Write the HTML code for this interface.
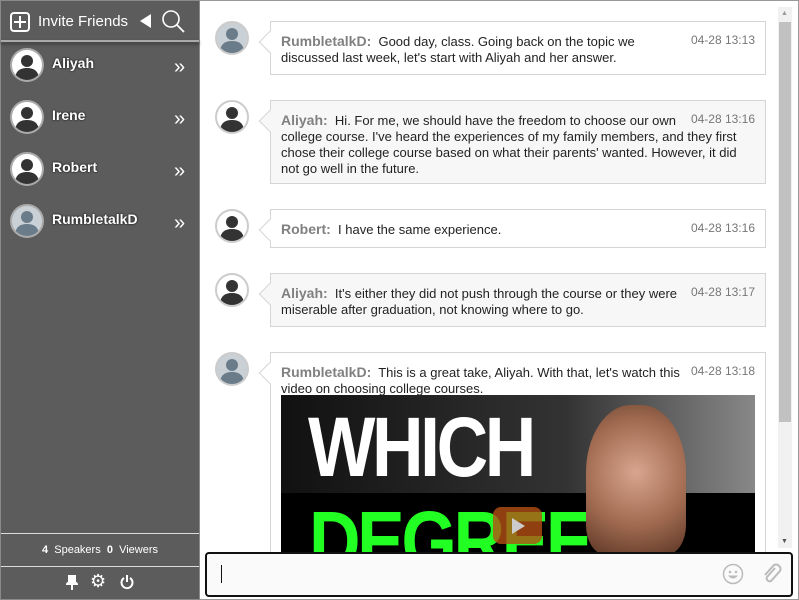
<!DOCTYPE html><html><head><style>
*{margin:0;padding:0;box-sizing:border-box}
body{width:799px;height:600px;overflow:hidden;font-family:Arial,"Liberation Sans",sans-serif;background:#fff;position:relative}
.sb{position:absolute;left:0;top:0;width:200px;height:600px;background:#5c5c5c;border:1px solid #8a8a8a}
.ab{position:absolute}
.av{position:absolute;width:34px;height:34px;border-radius:50%;background:#fff;border:2px solid #aaa;overflow:hidden}
.av.l{background:#c9d0d6}
.nm{position:absolute;left:52px;color:#fff;font-size:14px;text-shadow:0 0 2px #000;font-weight:bold}
.ch{position:absolute;left:174px;color:#fff;font-size:20px;line-height:20px}
.bub{position:absolute;left:270px;width:496px;border:1px solid #d5d5d5;font-size:13px;line-height:16px;color:#222;padding:11px 10px 9px 10px}
.bub b{color:#808080;font-size:14px}
.ts{position:absolute;right:10px;top:10px;color:#777;font-size:12px}
.ar{position:absolute;left:-9px;top:12px;width:16px;height:16px;background:inherit;border-left:1px solid #d5d5d5;border-bottom:1px solid #d5d5d5;transform:rotate(45deg)}
</style></head><body>
<div class="sb">
<div class="ab" style="left:9px;top:11px;width:20px;height:20px;border:2px solid #fff;border-radius:4px"></div>
<div class="ab" style="left:13px;top:20px;width:12px;height:2px;background:#fff"></div>
<div class="ab" style="left:18px;top:15px;width:2px;height:12px;background:#fff"></div>
<div class="ab" style="left:37px;top:12px;color:#fff;font-size:15px">Invite Friends</div>
<div class="ab" style="left:139px;top:13px;width:0;height:0;border-top:7px solid transparent;border-bottom:7px solid transparent;border-right:11px solid #fff"></div>
<svg class="ab" style="left:159px;top:7px" width="26" height="26"><circle cx="11" cy="11" r="8" fill="none" stroke="#fff" stroke-width="1.6"/><path d="M17 17L24 24" stroke="#fff" stroke-width="1.8"/></svg>
<div class="ab" style="left:0;top:39px;width:198px;height:2px;background:#aaa;box-shadow:0 2px 3px #333"></div>
</div>
<div class="av" style="left:10px;top:48px"><svg width="30" height="30"><circle cx="15" cy="11" r="6" fill="#333"/><path d="M3 30c0-9 5-12 12-12s12 3 12 12z" fill="#333"/></svg></div>
<div class="nm" style="top:55px">Aliyah</div><div class="ch" style="top:57px">»</div>
<div class="av" style="left:10px;top:100px"><svg width="30" height="30"><circle cx="15" cy="11" r="6" fill="#333"/><path d="M3 30c0-9 5-12 12-12s12 3 12 12z" fill="#333"/></svg></div>
<div class="nm" style="top:107px">Irene</div><div class="ch" style="top:109px">»</div>
<div class="av" style="left:10px;top:152px"><svg width="30" height="30"><circle cx="15" cy="11" r="6" fill="#333"/><path d="M3 30c0-9 5-12 12-12s12 3 12 12z" fill="#333"/></svg></div>
<div class="nm" style="top:159px">Robert</div><div class="ch" style="top:161px">»</div>
<div class="av l" style="left:10px;top:204px"><svg width="30" height="30"><circle cx="15" cy="11" r="6" fill="#6a7c8a"/><path d="M3 30c0-9 5-12 12-12s12 3 12 12z" fill="#6a7c8a"/></svg></div>
<div class="nm" style="top:211px">RumbletalkD</div><div class="ch" style="top:213px">»</div>
<div class="ab" style="left:1px;top:533px;width:198px;height:1px;background:#ddd"></div>
<div class="ab" style="left:0;top:544px;width:200px;text-align:center;color:#fff;font-size:11px;font-weight:bold">4 <span style="font-weight:normal">&nbsp;Speakers</span> &nbsp;0 <span style="font-weight:normal">&nbsp;Viewers</span></div>
<div class="ab" style="left:1px;top:566px;width:198px;height:1px;background:#ddd"></div>
<svg class="ab" style="left:66px;top:575px" width="12" height="16"><path d="M2 1h8M3 1v6l-2 2h10l-2-2V1M6 9v6" stroke="#fff" stroke-width="2" fill="#fff"/></svg>
<div class="ab" style="left:90px;top:571px;color:#fff;font-size:18px">&#9881;</div>
<svg class="ab" style="left:120px;top:574px" width="14" height="16"><path d="M4 4a5.5 5.5 0 1 0 6 0" fill="none" stroke="#fff" stroke-width="2"/><path d="M7 1v7" stroke="#fff" stroke-width="2"/></svg>
<div class="ab" style="left:200px;top:0;width:599px;height:600px;border:1px solid #999;border-left:none"></div>
<div class="ab" style="left:778px;top:7px;width:14px;height:541px;background:#f1f1f1"></div>
<div class="ab" style="left:779px;top:22px;width:12px;height:400px;background:#c1c1c1"></div>
<div class="ab" style="left:781px;top:10px;font-size:7px;color:#999">▲</div>
<div class="ab" style="left:781px;top:538px;font-size:7px;color:#555">▼</div>
<div class="av l" style="left:215px;top:21px;border-color:#ccc"><svg width="30" height="30"><circle cx="15" cy="11" r="6" fill="#6a7c8a"/><path d="M3 30c0-9 5-12 12-12s12 3 12 12z" fill="#6a7c8a"/></svg></div>
<div class="bub" style="top:21px;height:54px;background:#fff"><div class="ar"></div><b>RumbletalkD:</b>&nbsp; Good day, class. Going back on the topic we<br>discussed last week, let's start with Aliyah and her answer.<span class="ts">04-28 13:13</span></div>
<div class="av" style="left:215px;top:100px;border-color:#ccc"><svg width="30" height="30"><circle cx="15" cy="11" r="6" fill="#333"/><path d="M3 30c0-9 5-12 12-12s12 3 12 12z" fill="#333"/></svg></div>
<div class="bub" style="top:100px;height:84px;background:#f7f7f7"><div class="ar"></div><b>Aliyah:</b>&nbsp; Hi. For me, we should have the freedom to choose our own<br>college course. I've heard the experiences of my family members, and they first chose their college course based on what their parents' wanted. However, it did not go well in the future.<span class="ts">04-28 13:16</span></div>
<div class="av" style="left:215px;top:209px;border-color:#ccc"><svg width="30" height="30"><circle cx="15" cy="11" r="6" fill="#333"/><path d="M3 30c0-9 5-12 12-12s12 3 12 12z" fill="#333"/></svg></div>
<div class="bub" style="top:209px;height:39px;background:#fff"><div class="ar"></div><b>Robert:</b>&nbsp; I have the same experience.<span class="ts">04-28 13:16</span></div>
<div class="av" style="left:215px;top:273px;border-color:#ccc"><svg width="30" height="30"><circle cx="15" cy="11" r="6" fill="#333"/><path d="M3 30c0-9 5-12 12-12s12 3 12 12z" fill="#333"/></svg></div>
<div class="bub" style="top:273px;height:54px;background:#f7f7f7"><div class="ar"></div><b>Aliyah:</b>&nbsp; It's either they did not push through the course or they were<br>miserable after graduation, not knowing where to go.<span class="ts">04-28 13:17</span></div>
<div class="av l" style="left:215px;top:352px;border-color:#ccc"><svg width="30" height="30"><circle cx="15" cy="11" r="6" fill="#6a7c8a"/><path d="M3 30c0-9 5-12 12-12s12 3 12 12z" fill="#6a7c8a"/></svg></div>
<div class="bub" style="top:352px;height:210px;background:#fff"><div class="ar"></div><b>RumbletalkD:</b>&nbsp; This is a great take, Aliyah. With that, let's watch this<br>video on choosing college courses.<span class="ts">04-28 13:18</span></div>
<div class="ab" style="left:281px;top:395px;width:474px;height:157px;background:#000;overflow:hidden">
<div class="ab" style="left:0;top:0;width:474px;height:98px;background:linear-gradient(90deg,#111,#333 60%,#888)"></div>
<div class="ab" style="left:27px;top:4px;color:#fff;font-size:84px;font-weight:bold;letter-spacing:-4px;transform:scaleX(0.85);transform-origin:left">WHICH</div>
<div class="ab" style="left:28px;top:98px;color:#2f2;font-size:84px;font-weight:bold;letter-spacing:-4px;transform:scaleX(0.85);transform-origin:left">DEGREE</div>
<div class="ab" style="left:305px;top:10px;width:100px;height:150px;border-radius:45% 45% 20% 20%;background:radial-gradient(circle at 50% 45%,#d9a58e,#a06a50 55%,#5a3524)"></div>
<div class="ab" style="left:212px;top:112px;width:49px;height:37px;border-radius:8px;background:rgba(180,80,20,.8)"></div>
<div class="ab" style="left:231px;top:123px;border-top:8px solid transparent;border-bottom:8px solid transparent;border-left:13px solid #ccc"></div>
</div>
<div class="ab" style="left:205px;top:552px;width:588px;height:45px;border:2px solid #111;border-radius:4px;background:#fafafa"></div>
<div class="ab" style="left:221px;top:565px;width:1px;height:18px;background:#111"></div>
<svg class="ab" style="left:722px;top:563px" width="22" height="22"><circle cx="11" cy="11" r="9.5" fill="none" stroke="#bbb" stroke-width="1.5"/><circle cx="8" cy="9" r="1.3" fill="#bbb"/><circle cx="14" cy="9" r="1.3" fill="#bbb"/><path d="M6 12.5q5 6 10 0z" fill="#bbb"/></svg>
<svg class="ab" style="left:760px;top:563px" width="22" height="22"><path d="M15 5L7 14a3 3 0 0 0 4 4l9-10a4.5 4.5 0 0 0-6-6L5 12" fill="none" stroke="#bbb" stroke-width="2"/></svg>
</body></html>
